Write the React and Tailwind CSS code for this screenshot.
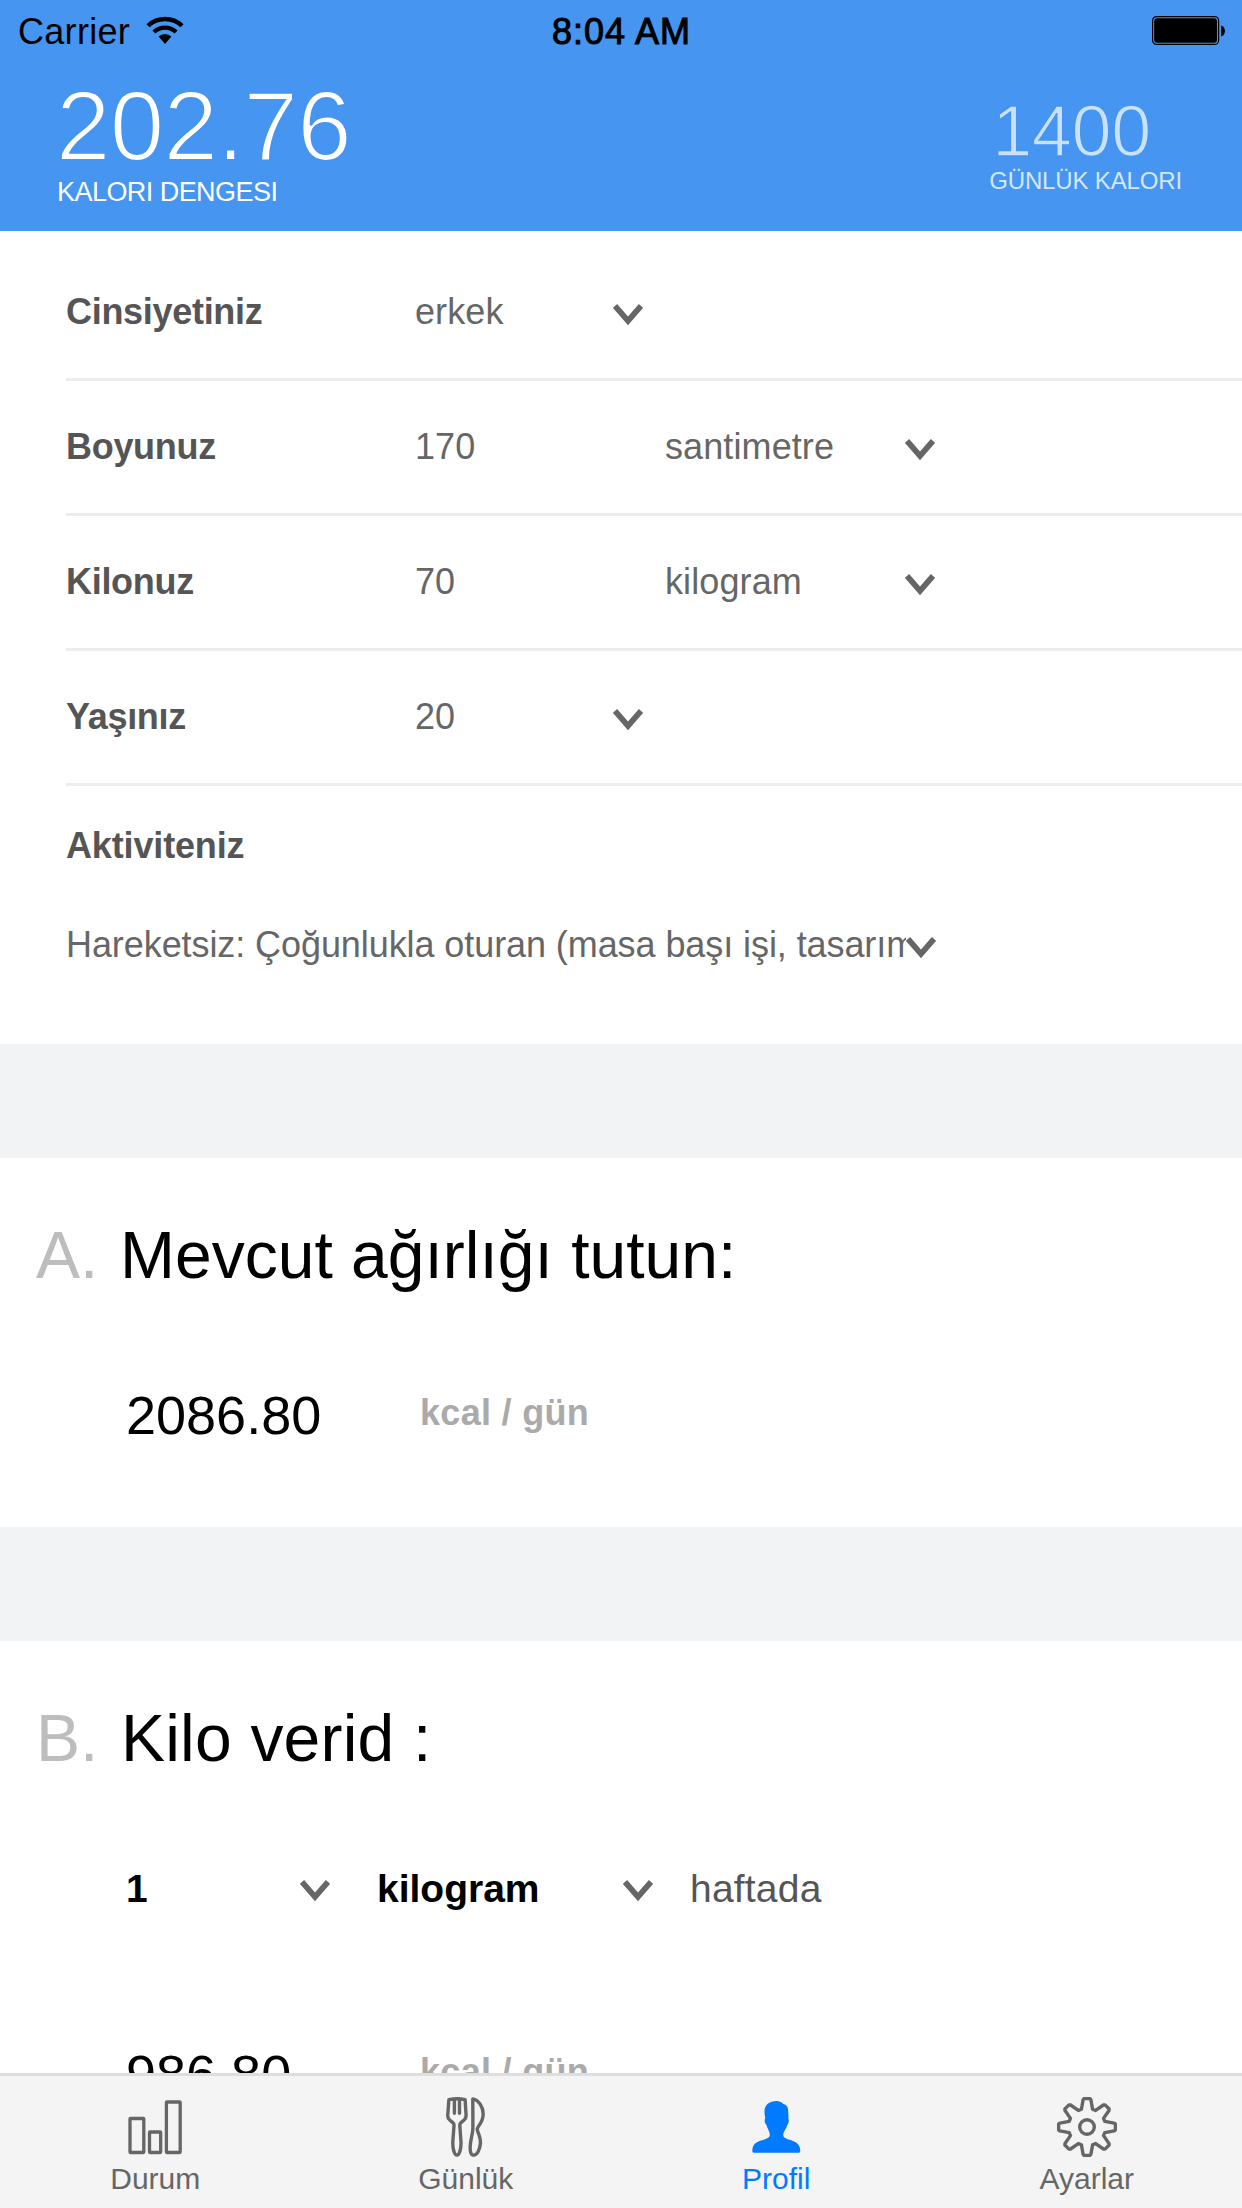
import React from "react";

function WifiIcon() {
  return (
    <svg width="38" height="28" viewBox="0 0 38 28" fill="none" stroke="#000" strokeWidth="4.3">
      <path d="M1.95 9.7A25 25 0 0 1 36.05 9.7" />
      <path d="M7.9 16A16.3 16.3 0 0 1 30.1 16" />
      <path d="M19 28L12.6 20.6A9.4 9.4 0 0 1 25.4 20.6Z" fill="#000" stroke="none" />
    </svg>
  );
}

function BatteryIcon() {
  return (
    <svg width="74" height="30" viewBox="0 0 74 30">
      <rect x="0.6" y="0.6" width="66" height="27.8" rx="4" fill="none" stroke="#000" strokeWidth="1.2" />
      <rect x="2.2" y="2.2" width="62.8" height="24.6" rx="3" fill="#000" />
      <path d="M69.2 9.5C74.2 11 74.2 19 69.2 20.5Z" fill="#000" />
    </svg>
  );
}

function Chevron({ className = "" }) {
  return (
    <svg className={"shrink-0 " + className} width="30" height="22" viewBox="0 0 30 22" fill="none" stroke="#666" strokeWidth="5.7">
      <path d="M2 1.900L15 16.900L28 1.900" />
    </svg>
  );
}

function BarsIcon() {
  return (
    <svg width="55" height="60" viewBox="0 0 55 60" fill="none" stroke="#666" strokeWidth="3.3" strokeLinejoin="round">
      <rect x="2" y="21.5" width="13.8" height="34" rx="0.5" />
      <rect x="21.5" y="35" width="11.2" height="20.5" rx="0.5" />
      <rect x="38.4" y="5" width="13.8" height="50.5" rx="0.5" />
    </svg>
  );
}

function ForkKnifeIcon() {
  return (
    <svg width="40" height="60" viewBox="0 0 40 60" fill="none" stroke="#666" strokeWidth="3.4" strokeLinejoin="round" strokeLinecap="round">
      <path d="M2.9 2.6Q11 1 19.1 2.6L20.1 18.500Q20.100 21.500 18.100 23L15 25.600Q13.700 26.800 13.800 28.500L15 45C15.200 51.500 13.500 58.100 10.900 58.100C8.300 58.100 6.600 51.500 6.800 45L8 28.500Q8.100 26.800 6.800 25.600L3.700 23Q1.700 21.500 1.700 18.500Z" />
      <path d="M8.400 3V16.300M13.500 3V16.300" strokeWidth="3.400" />
      <path d="M26.800 1.900C33 3 37.200 10.500 37.200 17C37.200 22 35 26 32.200 29.800C31 31.400 30.800 32.200 31.600 34.200C33.600 39 34.800 42 34.400 46.500C33.900 52.500 31.300 58.100 27.800 58.100C25 58.100 23.800 55 24.200 49C24.500 42.500 26.800 37 26.900 31Z" />
    </svg>
  );
}

function PersonIcon() {
  return (
    <svg width="49" height="52" viewBox="0 0 49 52" fill="#007aff">
      <path d="M24.2 0C28 0 29.8 1.400 31.300 2.900C34.600 3.700 36.100 6 36.100 9C36.200 12 36.800 14 36.300 17.200C37.200 18.600 36.900 22.500 35.200 24C34.500 27.500 32.500 29 31.300 32.500V35C34 40.500 48.300 37.500 48.300 50Q48.300 51.800 46.800 51.800H1.800Q.3 51.800 .3 50C.3 37.500 15.200 40.500 17.700 35V32.500C17 29 15.200 27.500 14.500 24C12.600 22.500 12.100 18.600 13.300 17.200C12.900 15 12.400 13 12.500 10C12.700 3.500 18 0 24.200 0Z" />
    </svg>
  );
}

function gearPath() {
  const tooth = [
    [-5.6, -17.8],
    [-3.9, -27.2],
    [-2.9, -28.4],
    [2.9, -28.4],
    [3.9, -27.2],
    [5.6, -17.8],
  ];
  const points = [];
  for (let i = 0; i < 8; i++) {
    const a = (i * Math.PI) / 4;
    for (const [x, y] of tooth) {
      const px = 30 + x * Math.cos(a) - y * Math.sin(a);
      const py = 30 + x * Math.sin(a) + y * Math.cos(a);
      points.push(px.toFixed(2) + " " + py.toFixed(2));
    }
  }
  return "M" + points.join("L") + "Z";
}

function GearIcon() {
  return (
    <svg width="60" height="60" viewBox="0 0 60 60" fill="none" stroke="#666" strokeWidth="3.4" strokeLinejoin="round">
      <path d={gearPath()} />
      <circle cx="30" cy="30" r="7.3" />
    </svg>
  );
}

function Row({ label, value, unit }) {
  return (
    <div className="ml-[66px] flex h-[135px] items-center border-b-3 border-[#ededed] text-[36px] leading-[36px] text-[#666]">
      <div className="w-[349px] font-bold tracking-[-0.3px] text-[#555]">{label}</div>
      <div className="w-[198px] tracking-[0.1px]">{value}</div>
      {unit ? (
        <>
          <div className="ml-[52px] w-[240px] tracking-[0.1px]">{unit}</div>
          <Chevron className="mt-[6px]" />
        </>
      ) : (
        <Chevron className="mt-[6px]" />
      )}
    </div>
  );
}

function Tab({ icon, label, active }) {
  return (
    <div className="flex flex-1 flex-col items-center pt-[21px]">
      <div className="flex h-[60px] items-center">{icon}</div>
      <div className={"mt-[6px] text-[30px] leading-[32px] " + (active ? "text-[#007aff]" : "text-[#666]")}>{label}</div>
    </div>
  );
}

function Kcal({ value }) {
  return (
    <div className="flex items-start">
      <div className="w-[294px] text-[54px] leading-[54px]">{value}</div>
      <div className="mt-[7px] text-[36px] leading-[36px] font-bold tracking-[0.3px] text-[#aaa]">kcal / gün</div>
    </div>
  );
}

export default function App() {
  return (
    <div className="flex h-[2208px] w-[1242px] flex-col overflow-hidden bg-white font-['Liberation_Sans',Arial,sans-serif] text-black">
      <header className="h-[231px] shrink-0 bg-[#4595f1]">
        <div className="grid h-[60px] grid-cols-3 pt-[14px] text-[36px] leading-[36px]">
          <div className="flex items-start pl-[18px]">
            <span className="tracking-[0.3px]">Carrier</span>
            <span className="mt-[2px] ml-[16px]">
              <WifiIcon />
            </span>
          </div>
          <div className="pl-px text-center tracking-[1px] [-webkit-text-stroke:1px_#000]">8:04 AM</div>
          <div className="flex justify-end pt-[2px] pr-[16px]">
            <BatteryIcon />
          </div>
        </div>
        <div className="flex justify-between pr-[60px] pl-[56px] text-white">
          <div className="pt-[19px]">
            <div className="text-[98px] leading-[94px] tracking-[-0.8px] [-webkit-text-stroke:2.2px_#4595f1]">202.76</div>
            <div className="mt-[6px] pl-px text-[27px] leading-[27px] tracking-[-0.55px]">KALORI DENGESI</div>
          </div>
          <div className="pt-[35px]">
            <div className="pl-[3px] text-[72px] leading-[72px] tracking-[-0.4px] text-[#cbe1fb] [-webkit-text-stroke:1.5px_#4595f1]">1400</div>
            <div className="mt-[2px] text-[24px] leading-[24px] tracking-[-0.15px] text-[#d5e7fc]">GÜNLÜK KALORI</div>
          </div>
        </div>
      </header>

      <main className="min-h-0 flex-1 overflow-hidden">
        <section className="h-[813px] pt-[15px]">
          <Row label="Cinsiyetiniz" value="erkek" />
          <Row label="Boyunuz" value="170" unit="santimetre" />
          <Row label="Kilonuz" value="70" unit="kilogram" />
          <Row label="Yaşınız" value="20" />
          <div className="pt-[42px] pl-[66px] text-[36px] leading-[36px]">
            <div className="font-bold tracking-[-0.15px] text-[#555]">Aktiviteniz</div>
            <div className="mt-[59px] flex text-[#666]">
              <div className="mt-[3px] h-[44px] w-[840px] overflow-hidden leading-[38px] tracking-[-0.08px] whitespace-nowrap">
                Hareketsiz: Çoğunlukla oturan (masa başı işi, tasarım
              </div>
              <Chevron className="mt-[14px]" />
            </div>
          </div>
        </section>

        <div className="h-[114px] bg-[#f2f3f5]" />

        <section className="h-[369px] pt-[64px]">
          <div className="flex pl-[36px] text-[66px] leading-[66px]">
            <div className="w-[84px] text-[#bdbdbd]">A.</div>
            <div>Mevcut ağırlığı tutun:</div>
          </div>
          <div className="mt-[100px] pl-[126px]">
            <Kcal value="2086.80" />
          </div>
        </section>

        <div className="h-[114px] bg-[#f2f3f5]" />

        <section className="h-[450px] pt-[64px]">
          <div className="flex pl-[36px] text-[66px] leading-[66px]">
            <div className="w-[85px] text-[#bdbdbd]">B.</div>
            <div className="tracking-[0.2px]">Kilo verid :</div>
          </div>
          <div className="mt-[98px] flex pl-[126px] text-[39px] leading-[39px]">
            <div className="w-[174px] font-bold">1</div>
            <Chevron className="mt-[11px]" />
            <div className="ml-[47px] w-[246px] font-bold">kilogram</div>
            <Chevron className="mt-[11px]" />
            <div className="ml-[37px] tracking-[0.2px] text-[#555]">haftada</div>
          </div>
          <div className="mt-[139px] pl-[126px]">
            <Kcal value="986.80" />
          </div>
        </section>
      </main>

      <nav className="flex h-[135px] shrink-0 border-t-3 border-[#dedede] bg-[#f4f4f4]">
        <Tab icon={<BarsIcon />} label="Durum" />
        <Tab icon={<ForkKnifeIcon />} label="Günlük" />
        <Tab icon={<PersonIcon />} label="Profil" active />
        <Tab icon={<GearIcon />} label="Ayarlar" />
      </nav>
    </div>
  );
}
